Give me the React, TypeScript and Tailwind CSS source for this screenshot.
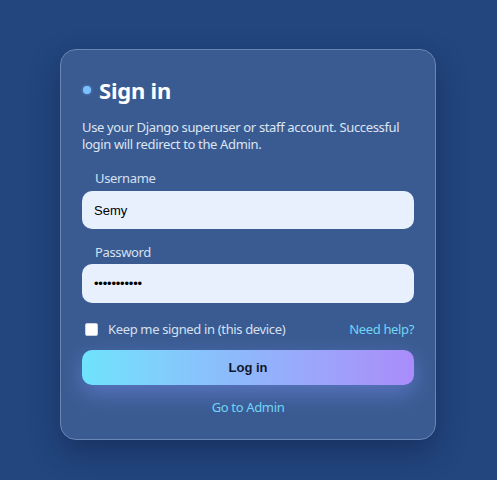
export default function App() {
  return (
    <div
      className="flex h-[480px] w-full justify-center bg-[#23467f] pr-[1px] pt-[49px]"
      style={{ fontFamily: "'Segoe UI', 'Noto Sans', sans-serif" }}
    >
      <div className="flex h-[391px] w-[376px] flex-col rounded-2xl border border-[#6a86b4] bg-[#3a5b92] px-[21px] pt-[24px] shadow-[0_12px_30px_rgba(10,25,60,0.45)]">
        {/* Title */}
        <div className="flex items-center gap-[8px] pl-[1px]">
          <span className="h-[8px] w-[8px] rounded-full bg-[#7cc0ff] shadow-[0_0_3px_rgba(124,192,255,0.6)]" />
          <h1 className="text-[22px] font-bold leading-[32px] tracking-[-0.2px] text-white">Sign in</h1>
        </div>
        <p className="mt-[13px] text-[13px] leading-[17px] tracking-[-0.35px] text-[#dde5f3]">
          Use your Django superuser or staff account. Successful login will redirect to the Admin.
        </p>

        {/* Fields */}
        <label className="mt-[16px] pl-[13px] text-[13px] leading-[18px] tracking-[-0.35px] text-[#d6e0f0]">Username</label>
        <input
          readOnly
          value="Semy"
          className="mt-[4px] h-[38px] w-full rounded-[10px] bg-[#e8f0fe] px-[12px] text-[13px] text-black outline-none"
          style={{ fontFamily: "'Liberation Sans', Arial, sans-serif" }}
        />
        <label className="mt-[14px] pl-[13px] text-[13px] leading-[18px] tracking-[-0.35px] text-[#d6e0f0]">Password</label>
        <input
          readOnly
          type="password"
          value="aaaaaaaaaaa"
          className="mt-[3px] h-[39px] w-full rounded-[10px] bg-[#e8f0fe] px-[12px] text-[13px] tracking-[-0.2px] text-black outline-none"
          style={{ fontFamily: "'Liberation Sans', Arial, sans-serif" }}
        />

        {/* Remember / help */}
        <div className="mt-[17px] flex items-center justify-between">
          <label className="flex items-center gap-[10px] pl-[3px] text-[13px] leading-[18px] tracking-[-0.35px] text-[#d6e0f0]">
            <span className="h-[13px] w-[13px] rounded-[2px] border border-[#c8d2e0] bg-white" />
            Keep me signed in (this device)
          </label>
          <a className="text-[13px] leading-[18px] tracking-[-0.35px] text-[#6fd6f7]">Need help?</a>
        </div>

        <button
          className="mt-[12px] h-[35px] w-full rounded-[10px] bg-gradient-to-r from-[#6ee3fc] via-[#8fb6fb] to-[#a98cfa] text-[13px] font-bold text-[#0f172a] shadow-[0_8px_22px_rgba(130,150,250,0.45)]"
          style={{ fontFamily: "'Liberation Sans', Arial, sans-serif" }}
        >
          Log in
        </button>

        <a className="mt-[13px] text-center text-[13px] leading-[18px] tracking-[-0.35px] text-[#6fd6f7]">Go to Admin</a>
      </div>
    </div>
  );
}
